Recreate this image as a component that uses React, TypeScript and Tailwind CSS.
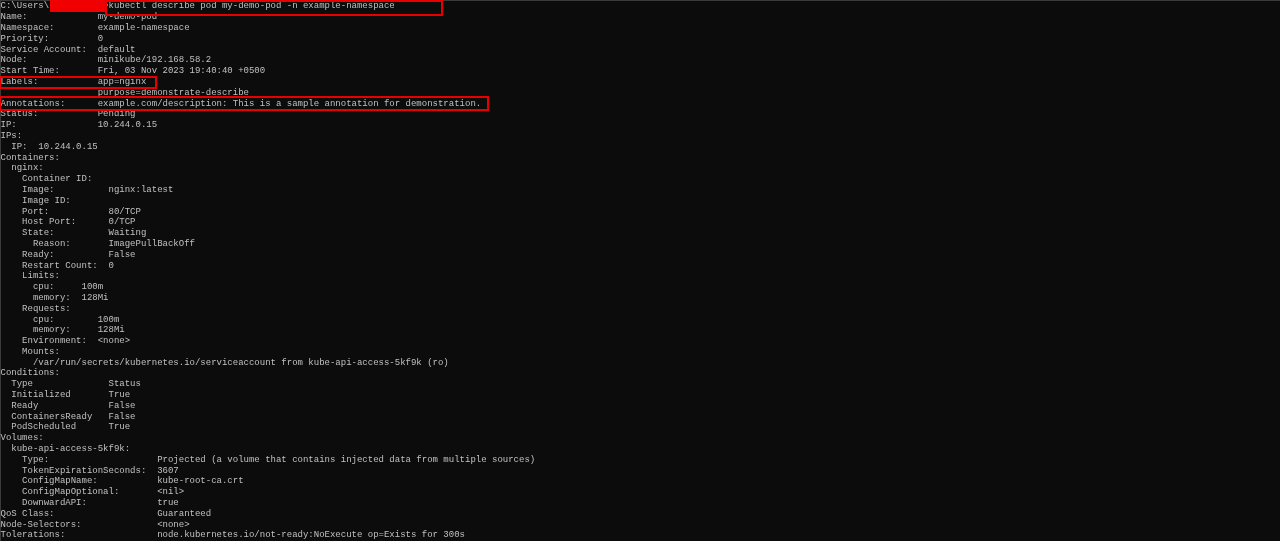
const lines = [
  "C:\\Users\\          >kubectl describe pod my-demo-pod -n example-namespace",
  "Name:             my-demo-pod",
  "Namespace:        example-namespace",
  "Priority:         0",
  "Service Account:  default",
  "Node:             minikube/192.168.58.2",
  "Start Time:       Fri, 03 Nov 2023 19:40:40 +0500",
  "Labels:           app=nginx",
  "                  purpose=demonstrate-describe",
  "Annotations:      example.com/description: This is a sample annotation for demonstration.",
  "Status:           Pending",
  "IP:               10.244.0.15",
  "IPs:",
  "  IP:  10.244.0.15",
  "Containers:",
  "  nginx:",
  "    Container ID:",
  "    Image:          nginx:latest",
  "    Image ID:",
  "    Port:           80/TCP",
  "    Host Port:      0/TCP",
  "    State:          Waiting",
  "      Reason:       ImagePullBackOff",
  "    Ready:          False",
  "    Restart Count:  0",
  "    Limits:",
  "      cpu:     100m",
  "      memory:  128Mi",
  "    Requests:",
  "      cpu:        100m",
  "      memory:     128Mi",
  "    Environment:  <none>",
  "    Mounts:",
  "      /var/run/secrets/kubernetes.io/serviceaccount from kube-api-access-5kf9k (ro)",
  "Conditions:",
  "  Type              Status",
  "  Initialized       True",
  "  Ready             False",
  "  ContainersReady   False",
  "  PodScheduled      True",
  "Volumes:",
  "  kube-api-access-5kf9k:",
  "    Type:                    Projected (a volume that contains injected data from multiple sources)",
  "    TokenExpirationSeconds:  3607",
  "    ConfigMapName:           kube-root-ca.crt",
  "    ConfigMapOptional:       <nil>",
  "    DownwardAPI:             true",
  "QoS Class:                   Guaranteed",
  "Node-Selectors:              <none>",
  "Tolerations:                 node.kubernetes.io/not-ready:NoExecute op=Exists for 300s",
]

export default function App() {
  return (
    <div className="relative h-[541px] w-[1280px] overflow-hidden bg-[#0c0c0c] shadow-[inset_1px_1px_0_#3a3a3a]">
      <div className="flex flex-col pl-[0.5px] pt-[1.4px] font-['Liberation_Mono',monospace] text-[9px] leading-[10.8px] text-[#c0c0c0] blur-[0.45px]">
        {lines.map((line, index) => (
          <div key={index} className="h-[10.8px] whitespace-pre">
            {line}
          </div>
        ))}
      </div>

      {/* redaction and highlight boxes drawn over the terminal */}
      <div className="absolute left-[50px] top-0 h-[12px] w-[56px] bg-[#f00000]" />
      <div className="absolute left-[105px] top-0 h-[16px] w-[338px] border-2 border-[#e80000]" />
      <div className="absolute left-0 top-[76px] h-[13px] w-[157px] border-2 border-l border-[#e80000]" />
      <div className="absolute left-0 top-[96px] h-[15px] w-[489px] border-2 border-l border-[#e80000]" />
    </div>
  )
}
